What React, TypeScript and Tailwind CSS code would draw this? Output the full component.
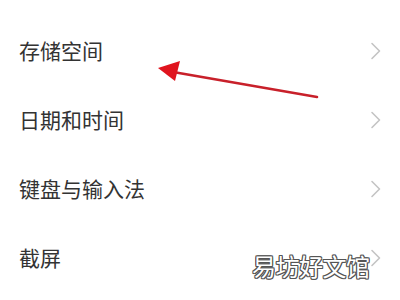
import React from "react";

const items = ["存储空间", "日期和时间", "键盘与输入法", "截屏"];

function Chevron() {
  return (
    <svg width="12" height="18" viewBox="0 0 12 18" className="shrink-0">
      <path d="M2 1.5 L9.5 9 L2 16.5" fill="none" stroke="#c4c4c4" strokeWidth="1.6" strokeLinecap="round" strokeLinejoin="round" />
    </svg>
  );
}

export default function App() {
  return (
    <div className="relative w-[400px] h-[300px] bg-white overflow-hidden [font-family:'Noto_Sans_CJK_SC','Noto_Sans',sans-serif]">
      <div className="flex flex-col pt-[16px]">
        {items.map((t) => (
          <div key={t} className="flex h-[69px] items-center justify-between pl-[19px] pr-[18px]">
            <span className="text-[21px] leading-none text-[#333333]">{t}</span>
            <Chevron />
          </div>
        ))}
      </div>
      <svg className="absolute left-0 top-0" width="400" height="300" viewBox="0 0 400 300">
        <line x1="176" y1="72.5" x2="317" y2="97" stroke="#c8202a" strokeWidth="2.6" strokeLinecap="round" />
        <polygon points="158,68 180,61 175,81" fill="#e0141e" />
      </svg>
      <div className="absolute left-[252px] top-[254px] text-[24px] leading-none tracking-[-0.5px] text-white [text-shadow:1px_0_#555,-1px_0_#555,0_1px_#555,0_-1px_#555,1px_1px_#555,-1px_-1px_#555,1px_-1px_#555,-1px_1px_#555]">
        易坊好文馆
      </div>
    </div>
  );
}
